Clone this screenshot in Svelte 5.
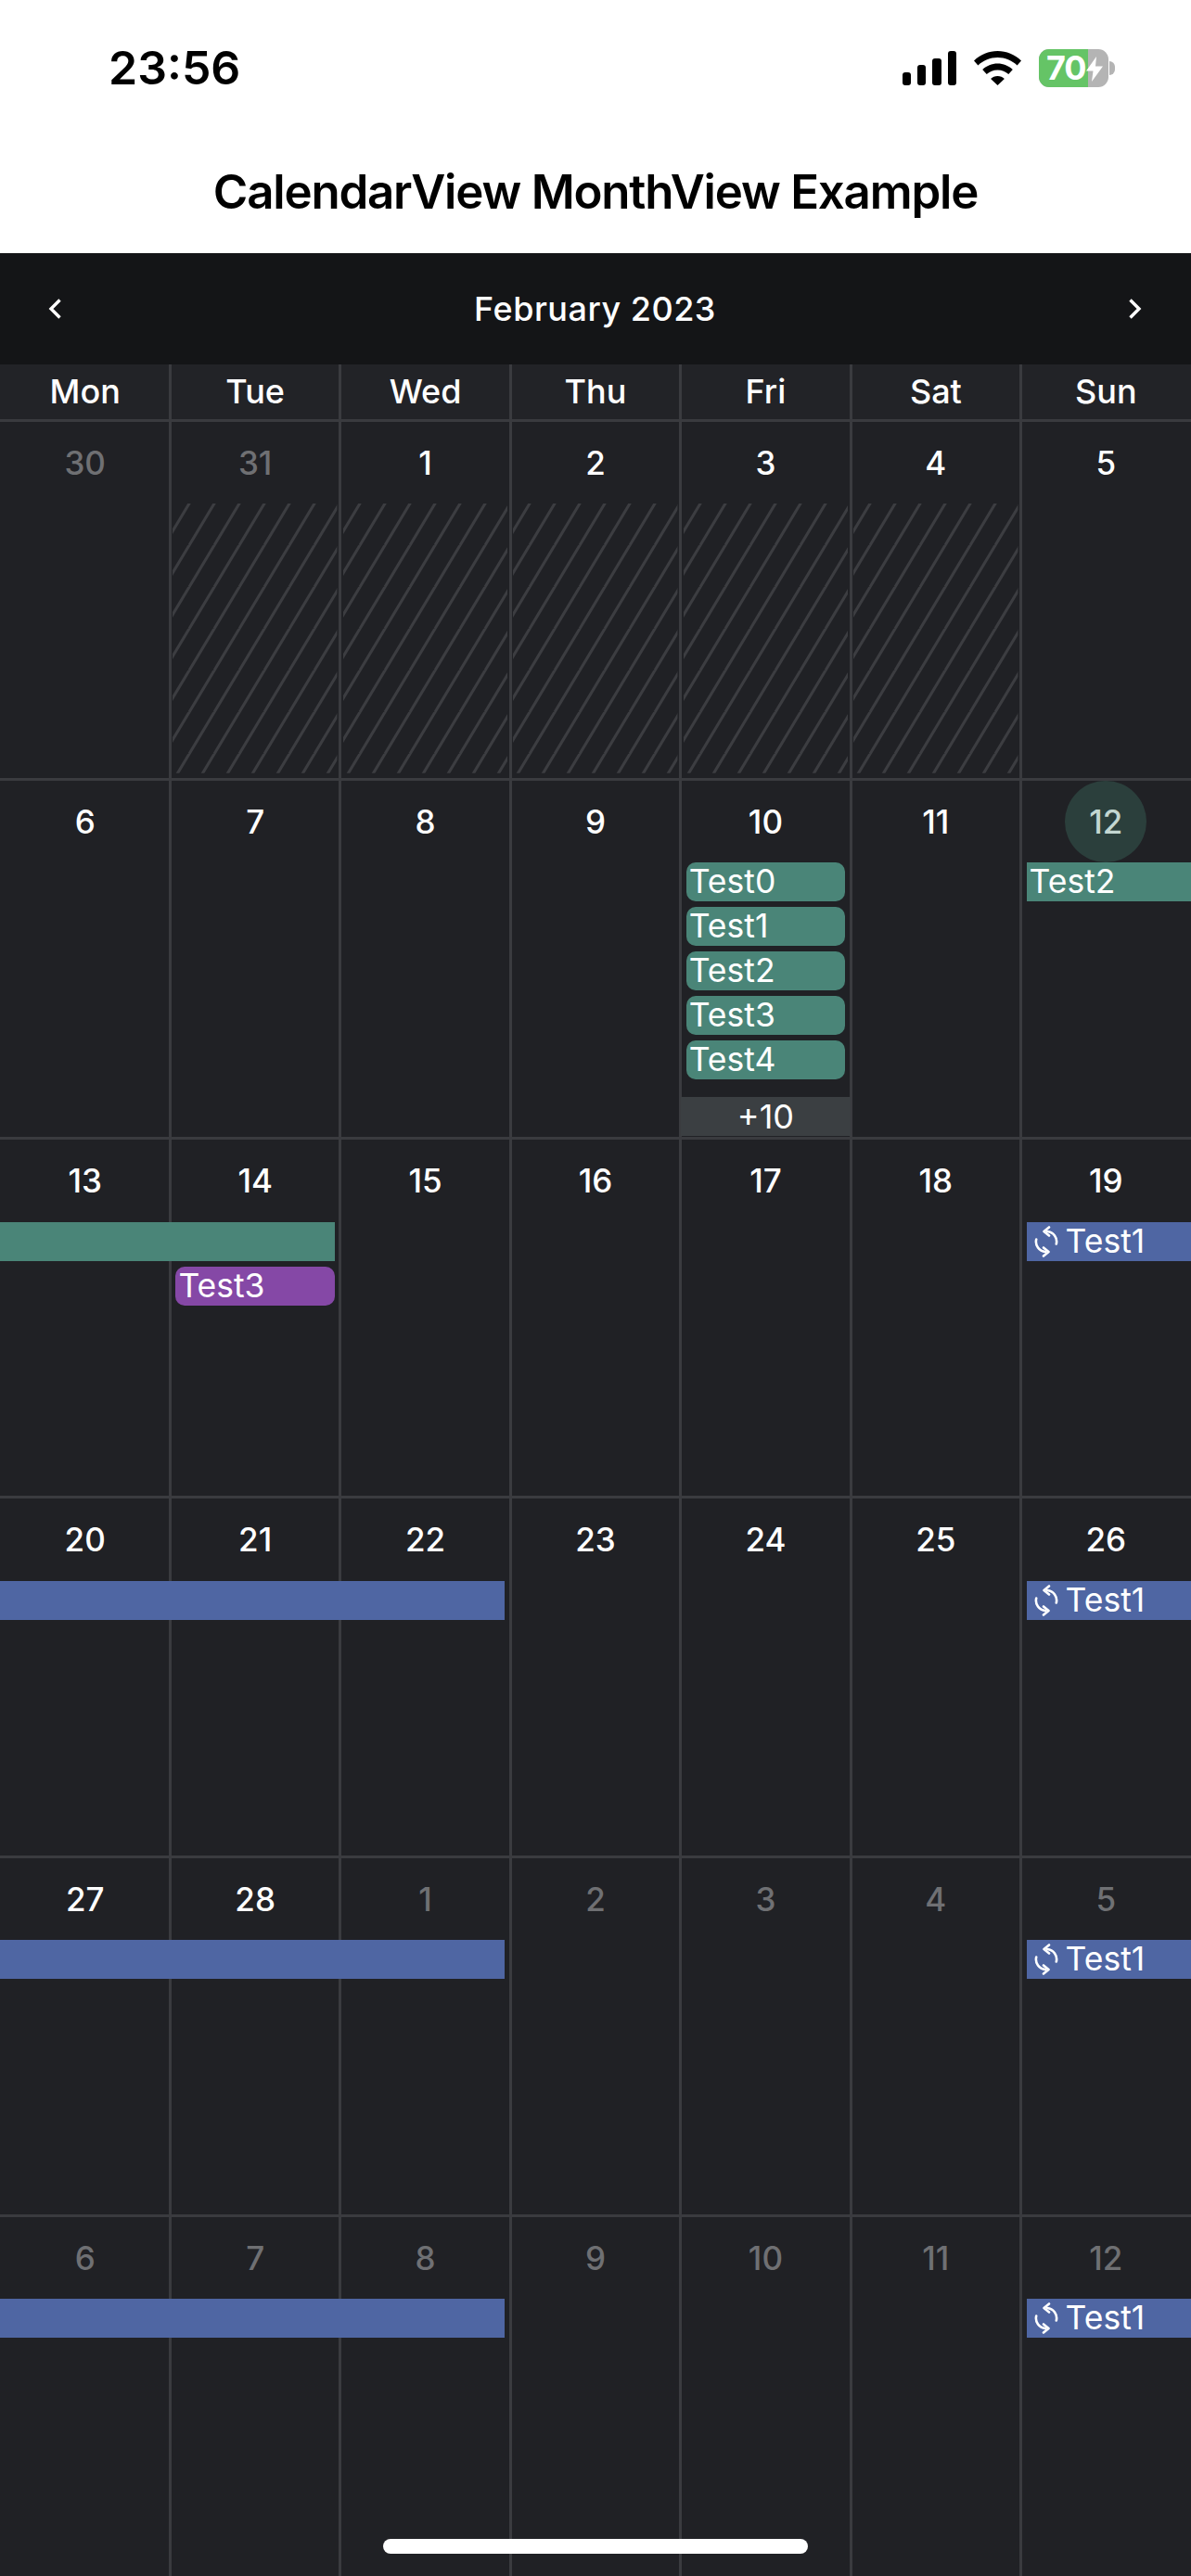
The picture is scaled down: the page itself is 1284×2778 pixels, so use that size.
<script lang="ts">
  const weekdays = ['Mon', 'Tue', 'Wed', 'Thu', 'Fri', 'Sat', 'Sun'];

  type Ev = { label?: string; col: number; span?: number; row: number; kind: string; shape?: string; sync?: boolean };
  type Week = { days: { n: number; muted?: boolean; today?: boolean; hatch?: boolean }[]; events: Ev[]; more?: { col: number; label: string } };

  const range = (from: number, to: number, extra = {}) =>
    Array.from({ length: to - from + 1 }, (_, i) => ({ n: from + i, ...extra }));

  const syncBars = (span: number): Ev[] => [
    { col: 7, row: 1, kind: 'blue', shape: 'flat-left', label: 'Test1', sync: true },
    { col: 1, span, row: 1, kind: 'blue', shape: 'flat-right' }
  ];

  const weeks: Week[] = [
    {
      days: [
        { n: 30, muted: true },
        { n: 31, muted: true, hatch: true },
        ...range(1, 4, { hatch: true }),
        { n: 5 }
      ],
      events: []
    },
    {
      days: [...range(6, 11), { n: 12, today: true }],
      events: [
        { col: 5, row: 1, kind: 'green', label: 'Test0' },
        { col: 5, row: 2, kind: 'green', label: 'Test1' },
        { col: 5, row: 3, kind: 'green', label: 'Test2' },
        { col: 5, row: 4, kind: 'green', label: 'Test3' },
        { col: 5, row: 5, kind: 'green', label: 'Test4' },
        { col: 7, row: 1, kind: 'green', shape: 'flat-left', label: 'Test2' }
      ],
      more: { col: 5, label: '+10' }
    },
    {
      days: range(13, 19),
      events: [
        { col: 1, span: 2, row: 1, kind: 'green', shape: 'flat-right' },
        { col: 2, row: 2, kind: 'purple', label: 'Test3' },
        { col: 7, row: 1, kind: 'blue', shape: 'flat-left', label: 'Test1', sync: true }
      ]
    },
    { days: range(20, 26), events: syncBars(3) },
    { days: [...range(27, 28), ...range(1, 5, { muted: true })], events: syncBars(3) },
    { days: range(6, 12, { muted: true }), events: syncBars(3) }
  ];
</script>

<div class="page">
  <header class="top">
    <div class="status">
      <span class="time">23:56</span>
      <div class="status-icons">
        <svg class="signal" width="58" height="37" viewBox="0 0 58 37" fill="#000">
          <rect x="0" y="23" width="9" height="14" rx="3" />
          <rect x="16" y="15" width="9" height="22" rx="3" />
          <rect x="32" y="8" width="10" height="29" rx="3" />
          <rect x="49" y="0" width="9" height="37" rx="3" />
        </svg>
        <svg class="wifi" width="51" height="37" viewBox="0 0 51 37" fill="#000">
          <path d="M25.5 0C35 0 44 3.8 51 10.4L46.6 15.5C40.9 10.2 33.5 7 25.5 7S10.1 10.2 4.4 15.5L0 10.4C7 3.8 16 0 25.5 0Z" />
          <path d="M25.5 13.5c6.2 0 11.9 2.4 16.3 6.5l-4.5 5.1c-3.1-2.9-7.2-4.6-11.8-4.6s-8.7 1.7-11.8 4.6L9.2 20c4.4-4.1 10.1-6.5 16.3-6.5Z" />
          <path d="M25.5 27c2.8 0 5.5 1.1 7.4 3L25.5 37l-7.4-7c1.9-1.9 4.6-3 7.4-3Z" />
        </svg>
        <div class="battery">
          <div class="battery-body">
            <div class="battery-fill"></div>
            <span class="battery-text">70</span>
            <svg class="bolt" width="18" height="27" viewBox="0 0 18 27" fill="#fff">
              <path d="M11 0 0 15.5h7.5L6 27 18 10.5h-8Z" />
            </svg>
          </div>
          <div class="battery-cap"></div>
        </div>
      </div>
    </div>
    <h1>CalendarView MonthView Example</h1>
  </header>

  <section class="calendar">
    <div class="month-nav">
      <svg width="14" height="22" viewBox="0 0 14 22" fill="none" stroke="#fff" stroke-width="3.4">
        <path d="M12.5 1.5 3 11l9.5 9.5" />
      </svg>
      <span class="month-title">February 2023</span>
      <svg width="14" height="22" viewBox="0 0 14 22" fill="none" stroke="#fff" stroke-width="3.4">
        <path d="M1.5 1.5 11 11l-9.5 9.5" />
      </svg>
    </div>

    <div class="weekdays">
      {#each weekdays as day}
        <div class="weekday">{day}</div>
      {/each}
    </div>

    <div class="weeks">
      {#each weeks as week, w}
        <div class="week">
          {#each week.days as day, d}
            <div class="cell" style="grid-column: {d + 1}">
              <div class="day" class:muted={day.muted} class:today={day.today}>{day.n}</div>
            </div>
            {#if day.hatch}
              <svg class="hatch" style="grid-column: {d + 1}" aria-hidden="true">
                <defs>
                  <pattern id="hatch-{w}-{d}" width="27" height="45" patternUnits="userSpaceOnUse">
                    <path d="M-9 45 18 0M18 45 45 0M-36 90-9 45M18 0 45-45" stroke="#3c3d41" stroke-width="3" />
                  </pattern>
                </defs>
                <rect width="100%" height="100%" fill="url(#hatch-{w}-{d})" />
              </svg>
            {/if}
          {/each}

          {#each week.events as ev}
            <div
              class="event {ev.kind} {ev.shape ?? ''}"
              style="grid-column: {ev.col} / span {ev.span ?? 1}; grid-row: {ev.row + 1}"
            >
              {#if ev.sync}
                <svg class="sync" width="26" height="34" viewBox="0 0 26 34" fill="none" stroke="#fff" stroke-width="2.6" stroke-linecap="round" stroke-linejoin="round">
                  <path d="M14 6A11 11 0 0 1 23.8 19.5" />
                  <path d="M12 28A11 11 0 0 1 2.2 14.5" />
                  <path d="M16 1.5 10.5 6l5.5 4.5" />
                  <path d="M10 23.5 15.5 28 10 32.5" />
                </svg>
              {/if}
              {#if ev.label}<span>{ev.label}</span>{/if}
            </div>
          {/each}

          {#if week.more}
            <div class="more" style="grid-column: {week.more.col}">{week.more.label}</div>
          {/if}
        </div>
      {/each}
    </div>
  </section>

  <div class="home-indicator"></div>
</div>

<style>
  :global(body) {
    margin: 0;
    background: #fff;
  }

  .page {
    position: relative;
    display: flex;
    flex-direction: column;
    height: 2778px;
    overflow: hidden;
    font-family: Inter, "Liberation Sans", sans-serif;
  }

  .top {
    height: 273px;
    background: #fff;
    color: #000;
  }

  .status {
    display: flex;
    align-items: center;
    justify-content: space-between;
    height: 146px;
    padding: 0 82px 0 117px;
  }

  .time {
    font-size: 50px;
    font-weight: 600;
  }

  .status-icons {
    display: flex;
    align-items: center;
    gap: 19px;
  }

  .battery {
    display: flex;
    align-items: center;
    gap: 1px;
  }

  .battery-body {
    position: relative;
    width: 75px;
    height: 41px;
    border-radius: 11px;
    background: #b4b4b4;
  }

  .battery-fill {
    width: 53px;
    height: 100%;
    border-radius: 11px 0 0 11px;
    background: #65c466;
  }

  .battery-text {
    position: absolute;
    left: 8px;
    top: 0;
    line-height: 41px;
    font-size: 36px;
    font-weight: 700;
    letter-spacing: -1px;
    color: #fff;
  }

  .bolt {
    position: absolute;
    left: 51px;
    top: 8px;
  }

  .battery-cap {
    width: 6px;
    height: 15px;
    border-radius: 0 6px 6px 0;
    background: #b4b4b4;
  }

  h1 {
    margin: 0;
    text-align: center;
    font-size: 51px;
    line-height: 122px;
    font-weight: 600;
    letter-spacing: -1.2px;
  }

  .calendar {
    flex: 1;
    display: flex;
    flex-direction: column;
    min-height: 0;
    background: #202125;
    color: #fff;
  }

  .month-nav {
    display: flex;
    align-items: center;
    justify-content: space-between;
    height: 120px;
    padding: 0 53px 0 52px;
    background: #141517;
  }

  .month-title {
    font-size: 36px;
    font-weight: 500;
    letter-spacing: 0.5px;
  }

  .weekdays {
    display: grid;
    grid-template-columns: repeat(7, 1fr);
    height: 58.5px;
    background: #222327;
  }

  .weekday {
    display: flex;
    align-items: center;
    justify-content: center;
    margin-left: -1.5px;
    border-left: 3px solid #3a3b3f;
    padding-right: 1.5px;
    font-size: 36px;
    font-weight: 500;
  }

  .weekday:first-child {
    margin-left: 0;
    border-left: 0;
    padding-left: 1.5px;
  }

  .weeks {
    flex: 1;
    display: grid;
    grid-template-rows: repeat(5, 387.25px) 1fr;
    min-height: 0;
  }

  .week {
    display: grid;
    grid-template-columns: repeat(7, 1fr);
    grid-template-rows: 88.5px repeat(5, 48px) 1fr;
    box-sizing: border-box;
    border-top: 3px solid #3a3b3f;
    min-height: 0;
  }

  .cell {
    grid-row: 1 / -1;
    margin-left: -1.5px;
    border-left: 3px solid #3a3b3f;
    padding-right: 1.5px;
  }

  .cell:first-child {
    margin-left: 0;
    border-left: 0;
    padding-left: 1.5px;
  }

  .day {
    width: 88px;
    height: 88px;
    margin: 0 auto;
    border-radius: 50%;
    display: flex;
    align-items: center;
    justify-content: center;
    font-size: 35px;
    font-weight: 500;
    color: #fff;
  }

  .day.muted {
    color: #6f7073;
  }

  .day.today {
    background: #2b3f3c;
    color: #c3d6d1;
  }

  .hatch {
    grid-row: 2 / -1;
    width: calc(100% - 6px);
    height: calc(100% - 5px);
    margin: 0 3px;
  }

  .event {
    display: flex;
    align-items: center;
    height: 42px;
    margin: 0 6px;
    padding-left: 3px;
    border-radius: 10px;
    box-sizing: border-box;
    font-size: 35.5px;
    line-height: 42px;
    color: #fff;
    white-space: nowrap;
    overflow: hidden;
  }

  .event.flat-left {
    margin-right: 0;
    border-radius: 0;
  }

  .event.flat-right {
    margin-left: 0;
    border-radius: 0;
  }

  .event.green {
    background: #4a8578;
  }

  .event.purple {
    background: #8548a6;
  }

  .event.blue {
    background: #4f66a3;
  }

  .sync {
    flex: none;
    margin: 0 8px 0 5px;
  }

  .more {
    grid-row: 7;
    align-self: end;
    height: 42px;
    margin-bottom: 1px;
    background: #3b3f42;
    text-align: center;
    font-size: 36px;
    line-height: 42px;
  }

  .home-indicator {
    position: absolute;
    left: 413px;
    bottom: 24px;
    width: 458px;
    height: 16px;
    border-radius: 8px;
    background: #fff;
  }
</style>
